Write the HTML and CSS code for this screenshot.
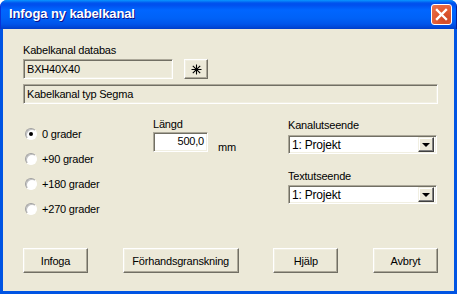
FILE: index.html
```html
<!DOCTYPE html>
<html>
<head>
	<meta charset="UTF-8">
	<title>Infoga ny kabelkanal</title>
	<link rel="stylesheet" href="styles.css">
</head>
<body>
	<div class="window">
		<div class="titlebar">
			<span class="title">Infoga ny kabelkanal</span>
			<div class="close">
				<svg width="13" height="13" viewBox="0 0 13 13">
					<path d="M2 2 L11 11 M11 2 L2 11" stroke="#fff" stroke-width="2.4" stroke-linecap="square"/>
				</svg>
			</div>
		</div>

		<div class="client">
			<!-- databas -->
			<div class="label">Kabelkanal databas</div>
			<div class="row">
				<div class="field readonly db">BXH40X40</div>
				<div class="button star">
					<svg width="11" height="11" viewBox="0 0 11 11">
						<path d="M5.5 0.5 V10.5 M0.5 5.5 H10.5 M1.8 1.8 L9.2 9.2 M9.2 1.8 L1.8 9.2" stroke="#000" stroke-width="1.1"/>
					</svg>
				</div>
			</div>
			<div class="field readonly typ">Kabelkanal typ Segma</div>

			<div class="options">
				<ul class="radios">
					<li><span class="radio checked"></span>0 grader</li>
					<li><span class="radio"></span>+90 grader</li>
					<li><span class="radio"></span>+180 grader</li>
					<li><span class="radio"></span>+270 grader</li>
				</ul>

				<div class="length">
					<div class="label">Längd</div>
					<div class="row">
						<div class="field number">500,0</div>
						<span class="unit">mm</span>
					</div>
				</div>

				<div class="looks">
					<div class="label">Kanalutseende</div>
					<div class="select">
						<span>1: Projekt</span>
						<span class="arrow"></span>
					</div>
					<div class="label second">Textutseende</div>
					<div class="select">
						<span>1: Projekt</span>
						<span class="arrow"></span>
					</div>
				</div>
			</div>

			<div class="buttons">
				<div class="button">Infoga</div>
				<div class="button wide">Förhandsgranskning</div>
				<div class="button">Hjälp</div>
				<div class="button">Avbryt</div>
			</div>
		</div>
	</div>
</body>
</html>
```

FILE: styles.css
```css
* {
	padding: 0;
	margin: 0;
	box-sizing: border-box;
}

body {
	background: #fff;
	font-family: "Liberation Sans", Arial, sans-serif;
	font-size: 11px;
	letter-spacing: -0.2px;
	color: #000;
}

li {
	list-style: none;
}

.window {
	width: 457px;
	height: 294px;
	display: flex;
	flex-direction: column;
	border-radius: 7px 7px 0 0;
	overflow: hidden;
	background: #0054e3;
}

/* title bar */
.titlebar {
	height: 29px;
	flex: none;
	display: flex;
	align-items: center;
	justify-content: space-between;
	padding: 0 4px 2px 8px;
	background: linear-gradient(to bottom, #0997ff 0, #0053ee 3px, #0050ee 5px, #0066ff 10px, #0062f7 18px, #0055eb 24px, #0048d8 27px, #003dc8 29px);
	border-left: 1px solid #0831d9;
	border-right: 1px solid #001ea0;
}

.title {
	color: #fff;
	font-weight: bold;
	font-size: 13px;
	letter-spacing: -0.1px;
	text-shadow: 1px 1px #0f1089;
}

.close {
	width: 21px;
	height: 21px;
	border: 1px solid #fff;
	border-radius: 3px;
	display: flex;
	align-items: center;
	justify-content: center;
	background: radial-gradient(circle at 70% 75%, #cc4626 0, #e15930 45%, #e87552 100%);
	margin-top: 2px;
}

/* client area */
.client {
	flex: 1;
	display: flex;
	flex-direction: column;
	background: #ece9d8;
	margin: 0 3px 3px 3px;
	padding: 15px 16px 18px 20px;
}

.label {
	line-height: 13px;
	height: 13px;
	margin-bottom: 2px;
}

.row {
	display: flex;
	align-items: flex-start;
}

.field {
	height: 20px;
	line-height: 16px;
	padding: 1px 3px;
	border: 1px solid;
	border-color: #aca899 #fff #fff #aca899;
	box-shadow: inset 1px 1px #716f64, inset -1px -1px #f1efe2;
	white-space: nowrap;
}

.readonly {
	background: #ece9d8;
}

.db {
	width: 150px;
}

.typ {
	width: 415px;
	margin-top: 5px;
}

.button {
	height: 25px;
	display: flex;
	align-items: center;
	justify-content: center;
	background: #ece9d8;
	border: 1px solid;
	border-color: #fff #716f64 #716f64 #fff;
	box-shadow: inset -1px -1px #aca899, inset 1px 1px #f1efe2;
	width: 65px;
}

.star {
	width: 24px;
	height: 20px;
	margin-left: 11px;
}

/* option columns */
.options {
	display: grid;
	grid-template-columns: 130px 135px 149px;
	margin-top: 15px;
	align-items: start;
}

.radios {
	padding-top: 2px;
}

.radios li {
	height: 25px;
	display: flex;
	align-items: center;
}

.radio {
	width: 12px;
	height: 12px;
	border-radius: 50%;
	border: 1px solid;
	border-color: #a0a0a0 #fff #fff #a0a0a0;
	background: #fff;
	box-shadow: inset 1px 1px #c0c0c0;
	margin: 0 5px 0 2px;
	display: flex;
	align-items: center;
	justify-content: center;
}

.checked::after {
	content: "";
	width: 4px;
	height: 4px;
	border-radius: 50%;
	background: #000;
}

.length {
	margin-top: -1px;
}

.length .label {
	margin-bottom: 1px;
}

.number {
	width: 55px;
	background: #fff;
	text-align: right;
	line-height: 14px;
}

.unit {
	margin: 9px 0 0 10px;
}

.looks .label {
	margin-bottom: 3px;
}

.looks .second {
	margin-top: 16px;
	margin-bottom: 2px;
}

.select {
	height: 19px;
	display: flex;
	align-items: center;
	justify-content: space-between;
	background: #fff;
	border: 1px solid;
	border-color: #aca899 #fff #fff #aca899;
	box-shadow: inset 1px 1px #716f64, inset -1px -1px #f1efe2;
	padding: 2px 2px 2px 3px;
	font-size: 12px;
}

.arrow {
	width: 16px;
	height: 15px;
	background: #ece9d8;
	border: 1px solid;
	border-color: #f1efe2 #404040 #404040 #f1efe2;
	box-shadow: inset -1px -1px #808080, inset 1px 1px #fff;
	position: relative;
}

.arrow::after {
	content: "";
	position: absolute;
	left: 3px;
	top: 5px;
	border-left: 4px solid transparent;
	border-right: 4px solid transparent;
	border-top: 4px solid #000;
}

/* bottom buttons */
.buttons {
	margin-top: auto;
	display: flex;
	justify-content: space-between;
	width: 415px;
}

.buttons .wide {
	width: 116px;
}
```
